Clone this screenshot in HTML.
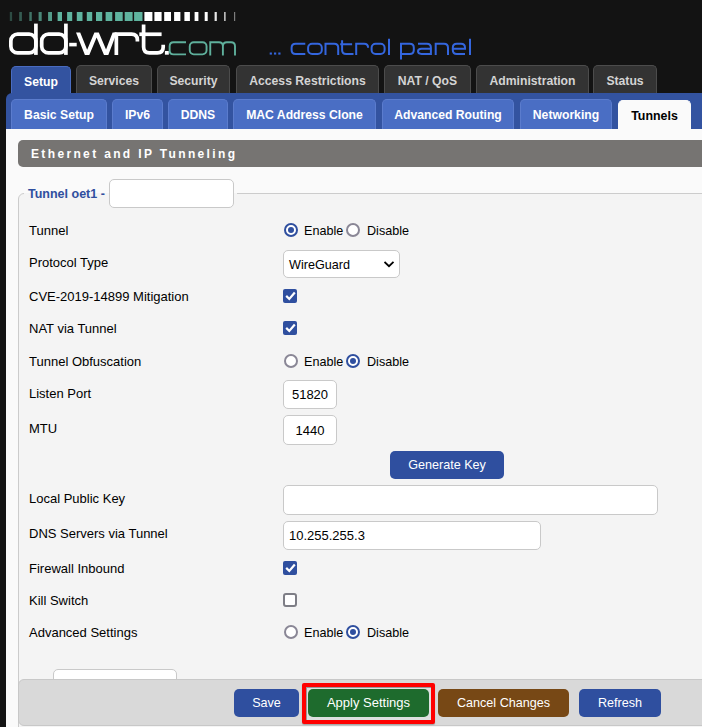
<!DOCTYPE html>
<html><head><meta charset="utf-8">
<style>
*{box-sizing:border-box;margin:0;padding:0}
html,body{width:702px;height:727px;overflow:hidden;background:#131313;font-family:"Liberation Sans",sans-serif;}
.abs{position:absolute}
.tab{position:absolute;top:65px;height:29px;background:#333;border:1px solid #4c4c4c;border-bottom:none;border-radius:5px 5px 0 0;color:#d4d4d4;font-weight:bold;font-size:12.2px;text-align:center;line-height:15px;padding-top:8px}
.tab.act{background:#3353a0;border-color:#4a6cc0;color:#fff;top:66px;height:28px;padding-top:8px}
#bar{position:absolute;left:6px;top:93px;width:696px;height:36px;background:#3353a0;border-radius:6px 0 0 0}
.st{position:absolute;top:99px;height:30px;background:#4a6ec4;border:1px solid #5b7ccd;border-bottom:none;border-radius:5px 5px 0 0;color:#fff;font-weight:bold;font-size:12.2px;text-align:center;line-height:30px}
.st.act{background:#fafafa;border-color:#fafafa;color:#000;top:100px;height:29px;font-size:12.4px;line-height:31px}
#content{position:absolute;left:6px;top:129px;width:696px;height:598px;background:#fafafa}
#hdr{position:absolute;left:18px;top:140px;width:700px;height:27px;background:#767472;border-radius:5px;color:#fff;font-weight:bold;font-size:12px;letter-spacing:2.35px;line-height:15px;padding-top:7px;padding-left:13px}
#fs{position:absolute;left:18px;top:193px;width:720px;height:600px;background:#f4f4f4;border:1px solid #ccc;border-radius:6px}
#leg{position:absolute;left:24px;top:192px;width:213px;height:3px;background:linear-gradient(#fafafa 0 1px,#f4f4f4 1px)}
.lbl{position:absolute;left:29px;font-size:13px;color:#000;white-space:nowrap}
.inp{position:absolute;background:#fff;border:1px solid #c9c9c9;border-radius:5px;font-size:13px;color:#000;white-space:nowrap}
.radio{position:absolute;width:14px;height:14px;border-radius:50%;border:2px solid #8a8796;background:#fff}
.radio.on{border-color:#2f4f9f}
.radio.on::after{content:"";position:absolute;left:2px;top:2px;width:6px;height:6px;border-radius:50%;background:#2f4f9f}
.rtxt{position:absolute;font-size:12.6px;color:#000;margin-top:1px;white-space:nowrap}
.cb{position:absolute;width:14px;height:14px;border-radius:2px;background:#2f4f9f}
.cb.off{background:#fff;border:2px solid #7e7e86;border-radius:3px}
.btn{position:absolute;border-radius:5px;color:#fff;font-size:12.6px;text-align:center;white-space:nowrap}
#bbar{position:absolute;left:18px;top:679px;width:700px;height:47px;background:#d9d9d9;border:1px solid #c8c8c8;border-radius:6px}
</style></head><body>

<!-- logo -->
<svg class="abs" style="left:0;top:0" width="702" height="64" viewBox="0 0 702 64">
  <rect x="9.8" y="12" width="2.3" height="9" fill="#5fb49f" fill-opacity="0.35"/>
  <rect x="19.2" y="12" width="2.7" height="9" fill="#5fb49f" fill-opacity="0.45"/>
  <rect x="29.3" y="12" width="2.5" height="9" fill="#5fb49f" fill-opacity="0.6"/>
  <rect x="38.6" y="12" width="3.1" height="9" fill="#5fb49f" fill-opacity="0.72"/>
  <rect x="48.1" y="12" width="3.9" height="9" fill="#5fb49f" fill-opacity="0.85"/>
  <rect x="57.6" y="12" width="4.4" height="9" fill="#5fb49f" fill-opacity="1"/>
  <rect x="67.1" y="12" width="5.1" height="9" fill="#5fb49f" fill-opacity="1"/>
  <rect x="76.8" y="12" width="5.7" height="9" fill="#5fb49f" fill-opacity="1"/>
  <rect x="86.8" y="12" width="5.4" height="9" fill="#5fb49f" fill-opacity="1"/>
  <rect x="96" y="12" width="6.2" height="9" fill="#5fb49f" fill-opacity="1"/>
  <rect x="105.6" y="12" width="6.7" height="9" fill="#5fb49f" fill-opacity="1"/>
  <rect x="115.1" y="12" width="7.6" height="9" fill="#5fb49f" fill-opacity="1"/>
  <rect x="124.7" y="12" width="7.9" height="9" fill="#5fb49f" fill-opacity="1"/>
  <rect x="134.1" y="12" width="8.4" height="9" fill="#5fb49f" fill-opacity="1"/>
  <rect x="144.4" y="12" width="8.0" height="9" fill="#ffffff" fill-opacity="1"/>
  <rect x="154.4" y="12" width="7.2" height="9" fill="#ffffff" fill-opacity="1"/>
  <rect x="164.2" y="12" width="6.8" height="9" fill="#ffffff" fill-opacity="1"/>
  <rect x="174.1" y="12" width="6.3" height="9" fill="#ffffff" fill-opacity="1"/>
  <rect x="184.4" y="12" width="5.5" height="9" fill="#ffffff" fill-opacity="1"/>
  <rect x="194.6" y="12" width="3.8" height="9" fill="#ffffff" fill-opacity="1"/>
  <rect x="204.7" y="12" width="3.0" height="9" fill="#ffffff" fill-opacity="1"/>
  <rect x="214.6" y="12" width="2.2" height="9" fill="#ffffff" fill-opacity="0.9"/>
  <rect x="224" y="12" width="1.7" height="9" fill="#ffffff" fill-opacity="0.7"/>
  <rect x="234" y="12" width="1.2" height="9" fill="#ffffff" fill-opacity="0.45"/>
  <g fill="none" stroke="#fff" stroke-width="3.7">
    <rect x="10.85" y="34.1" width="25.05" height="18.85" rx="6.8"/>
    <path d="M35.9 23.6 V54.9"/>
    <rect x="41.7" y="34.1" width="24.2" height="18.85" rx="6.8"/>
    <path d="M65.9 23.6 V54.9"/>
    <path d="M116.35 54.9 V34.2 H131.5 Q137.4 34.2 137.4 40.1 V41.5"/>
    <path d="M143.6 24.5 V47 Q143.6 52.85 149.5 52.85 H157.3 Q163.2 52.85 163.2 47 V44.8"/>
    <path d="M139.3 34.25 H161.6"/>
  </g>
  <g fill="#fff">
    <rect x="69.2" y="42.8" width="7.5" height="3.6"/>
    <polygon points="76,32.4 80.2,32.4 87.15,49.65 94.4,32.4 98.8,32.4 106.04,49.6 112.6,32.4 116.8,32.4 108.3,55 104,55 96.6,37.6 89.3,55 84.9,55"/>
    <rect x="164.9" y="51" width="3.9" height="3.7"/>
  </g>
  <g fill="none" stroke="#5fb09c" stroke-width="1.9">
    <path d="M186 42.25 H173.6 Q169.65 42.25 169.65 46.2 V50.4 Q169.65 54.35 173.6 54.35 H186"/>
    <rect x="189.75" y="42.25" width="16.8" height="12.1" rx="4"/>
    <path d="M210.25 55.4 V42.25 H218.9 Q222.9 42.25 222.9 46.2 V55.4 M222.9 46.2 Q222.9 42.25 226.9 42.25 H231 Q235 42.25 235 46.2 V55.4"/>
  </g>
  <g fill="#3466de">
    <rect x="269.7" y="52.5" width="2.2" height="2.1"/>
    <rect x="274" y="52.5" width="2.2" height="2.1"/>
    <rect x="278.3" y="52.5" width="2.2" height="2.1"/>
  </g>
  <g fill="none" stroke="#3466de" stroke-width="2">
    <path d="M305.3 43.8 H295.6 Q291.6 43.8 291.6 47.8 V49.9 Q291.6 53.9 295.6 53.9 H305.3"/>
    <rect x="308.1" y="43.8" width="13.7" height="10.1" rx="4"/>
    <path d="M325.5 54.9 V43.8 H334.2 Q338.2 43.8 338.2 47.8 V54.9"/>
    <path d="M342.1 40.3 V49.9 Q342.1 53.9 346.1 53.9 H353.5 M340.2 44.2 H352.1"/>
    <path d="M356.2 54.9 V43.8 H364.1 Q368.1 43.8 368.1 47.8"/>
    <rect x="371.6" y="43.8" width="13" height="10.1" rx="4"/>
    <path d="M389 38.8 V54.9"/>
    <path d="M401 59.4 V43.8 H409.8 Q413.8 43.8 413.8 47.8 V49.9 Q413.8 53.9 409.8 53.9 H401"/>
    <path d="M418 43.8 H426.9 Q430.9 43.8 430.9 47.8 V54.9 M430.9 48.8 H421.5 Q418 48.8 418 51.35 Q418 53.9 421.5 53.9 H430.9"/>
    <path d="M435.7 54.9 V43.8 H444 Q448 43.8 448 47.8 V54.9"/>
    <path d="M452.8 48.8 H465 V47.8 Q465 43.8 461 43.8 H456.8 Q452.8 43.8 452.8 47.8 V49.9 Q452.8 53.9 456.8 53.9 H465"/>
    <path d="M470 38.8 V54.9"/>
  </g>
</svg>

<div class="tab act" style="left:11px;width:60px">Setup</div>
<div class="tab" style="left:76px;width:76px">Services</div>
<div class="tab" style="left:157px;width:73px">Security</div>
<div class="tab" style="left:236px;width:143px">Access Restrictions</div>
<div class="tab" style="left:384px;width:87px">NAT / QoS</div>
<div class="tab" style="left:476px;width:113px">Administration</div>
<div class="tab" style="left:593px;width:64px">Status</div>

<div id="bar"></div>
<div class="st" style="left:11px;width:96px">Basic Setup</div>
<div class="st" style="left:112px;width:51px">IPv6</div>
<div class="st" style="left:168px;width:60px">DDNS</div>
<div class="st" style="left:233px;width:143px">MAC Address Clone</div>
<div class="st" style="left:382px;width:132px">Advanced Routing</div>
<div class="st" style="left:520px;width:92px">Networking</div>
<div class="st act" style="left:618px;width:73px">Tunnels</div>

<div id="content"></div>
<div id="hdr">Ethernet and IP Tunneling</div>
<div id="fs"></div>

<div id="leg"></div>
<div class="abs" style="left:28px;top:187px;font-size:12.5px;font-weight:bold;color:#2f4f9f;line-height:15px;white-space:nowrap">Tunnel oet1 -</div>
<div class="inp" style="left:109px;top:179px;width:125px;height:29px"></div>

<div class="lbl" style="top:223px;line-height:15px">Tunnel</div>
<div class="radio on" style="left:284px;top:223px"></div><div class="rtxt" style="left:304px;top:223px;line-height:15px">Enable</div>
<div class="radio" style="left:346px;top:223px"></div><div class="rtxt" style="left:367px;top:223px;line-height:15px">Disable</div>

<div class="lbl" style="top:255px;line-height:15px">Protocol Type</div>
<div class="inp" style="left:283px;top:250px;width:117px;height:28px"><span class="abs" style="left:5px;top:7px;font-size:12.6px;line-height:15px">WireGuard</span>
<svg class="abs" style="left:100px;top:10px" width="11" height="8" viewBox="0 0 11 8"><path d="M0.5 0.9 L5 5.2 L9.5 0.9" fill="none" stroke="#000" stroke-width="1.8"/></svg></div>

<div class="lbl" style="top:288.5px;line-height:15px">CVE-2019-14899 Mitigation</div>
<div class="cb" style="left:283px;top:289px"><svg class="abs" style="left:0;top:0" width="14" height="14" viewBox="0 0 14 14"><path d="M3.2 6.9 L6.3 10 L11.8 3.5" fill="none" stroke="#fff" stroke-width="2.2"/></svg></div>

<div class="lbl" style="top:321px;line-height:15px">NAT via Tunnel</div>
<div class="cb" style="left:283px;top:321px"><svg class="abs" style="left:0;top:0" width="14" height="14" viewBox="0 0 14 14"><path d="M3.2 6.9 L6.3 10 L11.8 3.5" fill="none" stroke="#fff" stroke-width="2.2"/></svg></div>

<div class="lbl" style="top:354px;line-height:15px">Tunnel Obfuscation</div>
<div class="radio" style="left:284px;top:354px"></div><div class="rtxt" style="left:304px;top:354px;line-height:15px">Enable</div>
<div class="radio on" style="left:346px;top:354px"></div><div class="rtxt" style="left:367px;top:354px;line-height:15px">Disable</div>

<div class="lbl" style="top:385.5px;line-height:15px">Listen Port</div>
<div class="inp" style="left:283px;top:380px;width:54px;height:29px;text-align:center"><span style="display:block;margin-top:6px;font-size:13px;line-height:15px">51820</span></div>

<div class="lbl" style="top:421px;line-height:15px">MTU</div>
<div class="inp" style="left:283px;top:415px;width:54px;height:30px;text-align:center"><span style="display:block;margin-top:7px;font-size:13px;line-height:15px">1440</span></div>

<div class="btn" style="left:390px;top:451px;width:114px;height:28px;background:#2f4f9f;line-height:15px;padding-top:7px">Generate Key</div>

<div class="lbl" style="top:490.7px;line-height:15px">Local Public Key</div>
<div class="inp" style="left:283px;top:485px;width:375px;height:30px"></div>

<div class="lbl" style="top:525.8px;line-height:15px">DNS Servers via Tunnel</div>
<div class="inp" style="left:283px;top:521px;width:258px;height:29px"><span class="abs" style="left:5px;top:6px;font-size:13px;line-height:15px">10.255.255.3</span></div>

<div class="lbl" style="top:560.5px;line-height:15px">Firewall Inbound</div>
<div class="cb" style="left:283px;top:561px"><svg class="abs" style="left:0;top:0" width="14" height="14" viewBox="0 0 14 14"><path d="M3.2 6.9 L6.3 10 L11.8 3.5" fill="none" stroke="#fff" stroke-width="2.2"/></svg></div>

<div class="lbl" style="top:592.5px;line-height:15px">Kill Switch</div>
<div class="cb off" style="left:283px;top:593px"></div>

<div class="lbl" style="top:624.5px;line-height:15px">Advanced Settings</div>
<div class="radio" style="left:284px;top:625px"></div><div class="rtxt" style="left:304px;top:625px;line-height:15px">Enable</div>
<div class="radio on" style="left:346px;top:625px"></div><div class="rtxt" style="left:367px;top:625px;line-height:15px">Disable</div>

<div class="inp" style="left:53px;top:669px;width:124px;height:30px"></div>

<div id="bbar"></div>
<div class="btn" style="left:234px;top:689px;width:65px;height:28px;background:#2f4f9f;line-height:15px;padding-top:7px">Save</div>
<div class="abs" style="left:302px;top:683px;width:133px;height:41px;border:4px solid #f00;border-radius:2px;background:#dde0e0;box-shadow:inset 1px 1px 0 #9a9a9a,0 1px 1px rgba(0,0,0,.25)"></div>
<div class="btn" style="left:308px;top:689px;width:121px;height:28px;background:#1e6b2d;line-height:15px;padding-top:6px;font-size:13px">Apply Settings</div>
<div class="btn" style="left:438px;top:689px;width:131px;height:28px;background:#774815;line-height:15px;padding-top:7px">Cancel Changes</div>
<div class="btn" style="left:579px;top:689px;width:82px;height:28px;background:#2f4f9f;line-height:15px;padding-top:7px">Refresh</div>

</body></html>
